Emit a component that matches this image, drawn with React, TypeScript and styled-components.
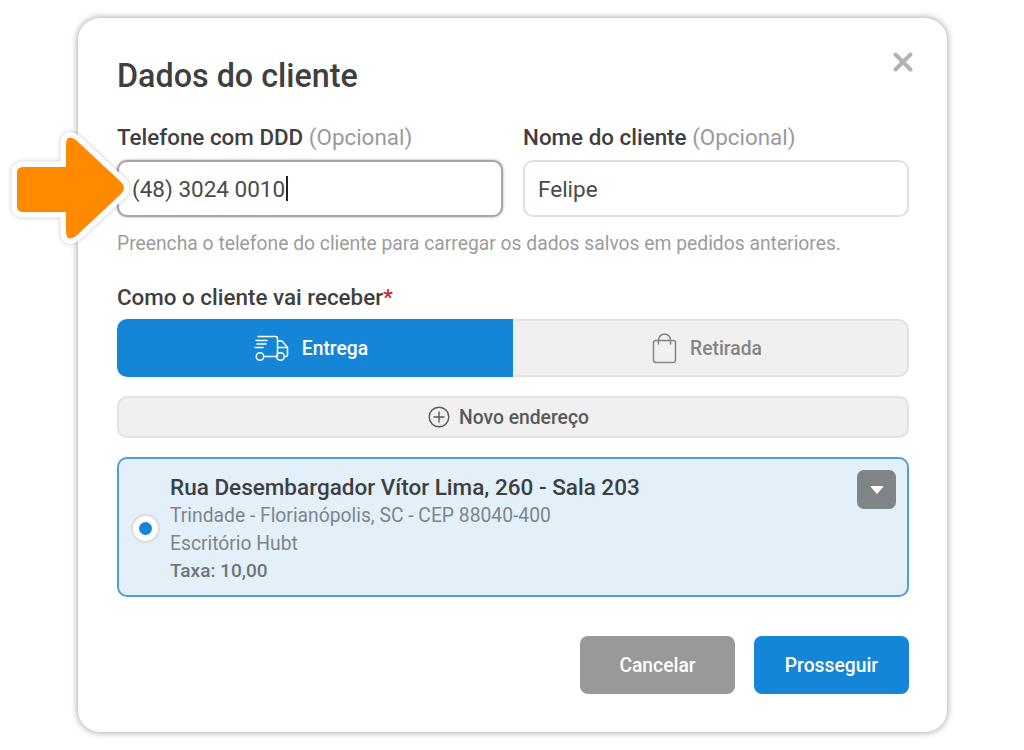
import styled, { createGlobalStyle } from "styled-components";

const Global = createGlobalStyle`
  html, body { margin: 0; padding: 0; background: #fff; }
  body { font-family: Roboto, "Liberation Sans", sans-serif; color: #3f3f3f; }
  * { box-sizing: border-box; }
`;

const Page = styled.div`
  width: 1024px;
  height: 750px;
  padding: 18px 0 0 78px;
  overflow: hidden;
  position: relative;
`;

const Modal = styled.div`
  width: 869px;
  height: 714px;
  background: #fff;
  border-radius: 22px;
  box-shadow: 0 0 6px 1px rgba(0, 0, 0, 0.32);
  padding: 39px 38px 0 39px;
  position: relative;
`;

const Title = styled.h1`
  margin: 0;
  font-size: 32.3px;
  line-height: 38px;
  font-weight: 500;
  color: #3f3f3f;
`;

const Close = styled.button`
  position: absolute;
  top: 34px;
  right: 34px;
  width: 20px;
  height: 20px;
  padding: 0;
  border: 0;
  background: none;
  display: flex;
`;

const Fields = styled.div`
  display: grid;
  grid-template-columns: 386px 386px;
  gap: 20px;
  margin-top: 28px;
`;

const Field = styled.div`
  display: flex;
  flex-direction: column;
`;

const Label = styled.label`
  font-size: 22.4px;
  line-height: 28px;
  font-weight: 500;
  color: #3f3f3f;
  span {
    font-weight: 400;
    color: #9a9a9a;
  }
  em {
    font-style: normal;
    color: #d0263a;
  }
`;

const Input = styled.div<{ $focused?: boolean }>`
  margin-top: 9px;
  height: 57px;
  border-radius: 10px;
  background: #fff;
  border: ${(p) => (p.$focused ? "2px solid #a6a6a6" : "2px solid #e0e0e0")};
  box-shadow: ${(p) => (p.$focused ? "0 0 3px rgba(0,0,0,.35)" : "none")};
  padding: 0 13px;
  display: flex;
  align-items: center;
  font-size: 22.5px;
  color: #4a4a4a;
`;

const Caret = styled.i`
  display: inline-block;
  width: 1.5px;
  height: 25px;
  background: #222;
  margin-left: 1px;
`;

const Hint = styled.p`
  margin: 15px 0 0;
  font-size: 19.3px;
  line-height: 24px;
  color: #9c9c9c;
`;

const Section = styled.div`
  margin-top: 27px;
`;

const Tabs = styled.div`
  display: grid;
  grid-template-columns: 396px 396px;
  margin-top: 8px;
  height: 58px;
  border-radius: 10px;
  overflow: hidden;
`;

const Tab = styled.div<{ $active?: boolean }>`
  display: flex;
  align-items: center;
  justify-content: center;
  gap: 13px;
  padding-right: ${(p) => (p.$active ? "8px" : "6px")};
  font-size: 19.3px;
  font-weight: 500;
  background: ${(p) => (p.$active ? "#1585d8" : "#f0f0f0")};
  color: ${(p) => (p.$active ? "#fff" : "#858585")};
  border: ${(p) => (p.$active ? "0" : "2px solid #e2e2e2")};
  border-left: 0;
  border-radius: ${(p) => (p.$active ? "0" : "0 10px 10px 0")};
`;

const NewAddress = styled.button`
  width: 792px;
  height: 42px;
  margin-top: 19px;
  padding: 0 9px 0 0;
  border-radius: 10px;
  border: 2px solid #e2e2e2;
  background: #f0f0f0;
  display: flex;
  align-items: center;
  justify-content: center;
  gap: 9px;
  font-family: inherit;
  font-size: 19.3px;
  font-weight: 500;
  color: #595959;
`;

const AddressCard = styled.div`
  position: relative;
  width: 792px;
  height: 140px;
  margin-top: 19px;
  border: 2px solid #4f9fd6;
  border-radius: 10px;
  background: #e3f0fa;
  display: flex;
  align-items: center;
  padding: 0 0 0 12px;
  gap: 10px;
`;

const Radio = styled.span`
  width: 29px;
  height: 29px;
  margin-top: 3px;
  border-radius: 50%;
  background: #fff;
  border: 2px solid #dcdcdc;
  display: flex;
  align-items: center;
  justify-content: center;
  flex: none;
  &::after {
    content: "";
    width: 13px;
    height: 13px;
    border-radius: 50%;
    background: #1585d8;
  }
`;

const AddressText = styled.div`
  display: flex;
  flex-direction: column;
  padding-top: 1px;
  font-size: 19.3px;
  line-height: 28px;
  color: #7d858b;
`;

const Street = styled.div`
  font-size: 22.5px;
  line-height: 30px;
  font-weight: 500;
  color: #3c4043;
`;

const Fee = styled.div`
  font-weight: 500;
  font-size: 19px;
  line-height: 26px;
  color: #6f767b;
`;

const MenuButton = styled.button`
  position: absolute;
  top: 11px;
  right: 11px;
  width: 39px;
  height: 39px;
  border: 0;
  border-radius: 7px;
  background: #7f8487;
  display: flex;
  align-items: center;
  justify-content: center;
  padding: 0;
`;

const Actions = styled.div`
  display: flex;
  justify-content: flex-end;
  gap: 19px;
  width: 792px;
  margin-top: 39px;
`;

const Action = styled.button<{ $primary?: boolean }>`
  width: 155px;
  height: 58px;
  border: 0;
  border-radius: 8px;
  background: ${(p) => (p.$primary ? "#1585d8" : "#999999")};
  color: #fff;
  font-family: inherit;
  font-size: 19.3px;
  font-weight: 500;
`;

const Arrow = styled.svg`
  position: absolute;
  left: 8px;
  top: 125px;
`;

const TruckIcon = () => (
  <svg width="35" height="27" viewBox="0 0 35 27" fill="none" stroke="#fff" strokeWidth="1.5" strokeLinecap="round" strokeLinejoin="round">
    <path d="M4 1.500h17.500a2 2 0 0 1 2 2V21" />
    <path d="M23.500 6h4.500l5.500 6.500V20a1.500 1.500 0 0 1-1.500 1.500h-.5" />
    <path d="M24 12.500h9" />
    <path d="M2 5.500h11M3 9h9M1 12.500h8" />
    <circle cx="6" cy="21.500" r="3.800" />
    <circle cx="26.500" cy="21.500" r="3.800" />
    <path d="M10 21.500h12.500" />
  </svg>
);

const BagIcon = () => (
  <svg width="25" height="31" viewBox="0 0 25 31" fill="none" stroke="#858585" strokeWidth="1.500" strokeLinecap="round" strokeLinejoin="round">
    <path d="M6.500 7.500H3.500a2 2 0 0 0-2 2V27a2.500 2.500 0 0 0 2.500 2.500h17a2.500 2.500 0 0 0 2.500-2.500V9.500a2 2 0 0 0-2-2H18.500" />
    <path d="M6.500 11V7a6 6 0 0 1 12 0v4" />
    <path d="M6.500 7.500h12" />
  </svg>
);

const PlusCircle = () => (
  <svg width="22" height="22" viewBox="0 0 22 22" fill="none" stroke="#595959" strokeWidth="1.400" strokeLinecap="round">
    <circle cx="11" cy="11" r="9.800" />
    <path d="M11 6v10M6 11h10" />
  </svg>
);

export default function App() {
  return (
    <Page>
      <Global />
      <Modal>
        <Close aria-label="Fechar">
          <svg width="20" height="20" viewBox="0 0 20 20" stroke="#b3b3b3" strokeWidth="4" strokeLinecap="round">
            <path d="M2.500 2.500l15 15M17.500 2.500l-15 15" />
          </svg>
        </Close>
        <Title>Dados do cliente</Title>
        <Fields>
          <Field>
            <Label>Telefone com DDD <span>(Opcional)</span></Label>
            <Input $focused>(48) 3024 0010<Caret /></Input>
          </Field>
          <Field>
            <Label>Nome do cliente <span>(Opcional)</span></Label>
            <Input>Felipe</Input>
          </Field>
        </Fields>
        <Hint>Preencha o telefone do cliente para carregar os dados salvos em pedidos anteriores.</Hint>
        <Section>
          <Label>Como o cliente vai receber<em>*</em></Label>
          <Tabs>
            <Tab $active><TruckIcon />Entrega</Tab>
            <Tab><BagIcon />Retirada</Tab>
          </Tabs>
        </Section>
        <NewAddress><PlusCircle />Novo endereço</NewAddress>
        <AddressCard>
          <Radio />
          <AddressText>
            <Street>Rua Desembargador Vítor Lima, 260 - Sala 203</Street>
            <div>Trindade - Florianópolis, SC - CEP 88040-400</div>
            <div>Escritório Hubt</div>
            <Fee>Taxa: 10,00</Fee>
          </AddressText>
          <MenuButton aria-label="Opções">
            <svg width="14" height="8" viewBox="0 0 14 8"><path d="M1 .5h12L7 7.500z" fill="#fff" stroke="#fff" strokeLinejoin="round" /></svg>
          </MenuButton>
        </AddressCard>
        <Actions>
          <Action>Cancelar</Action>
          <Action $primary>Prosseguir</Action>
        </Actions>
      </Modal>
      <Arrow width="126" height="130" viewBox="0 0 126 130">
        <path
          d="M58 20 Q58 8 68 15 L113 57 Q119 63 113 69 L68 111 Q58 118 58 106 L58 87 L15 87 Q9 87 9 81 L9 48 Q9 42 15 42 L58 42 Z"
          fill="#ff8a00"
          stroke="#fff"
          strokeWidth="11"
          strokeLinejoin="round"
          paintOrder="stroke"
          style={{ filter: "drop-shadow(0 0 2px rgba(0,0,0,.22))" }}
        />
      </Arrow>
    </Page>
  );
}
